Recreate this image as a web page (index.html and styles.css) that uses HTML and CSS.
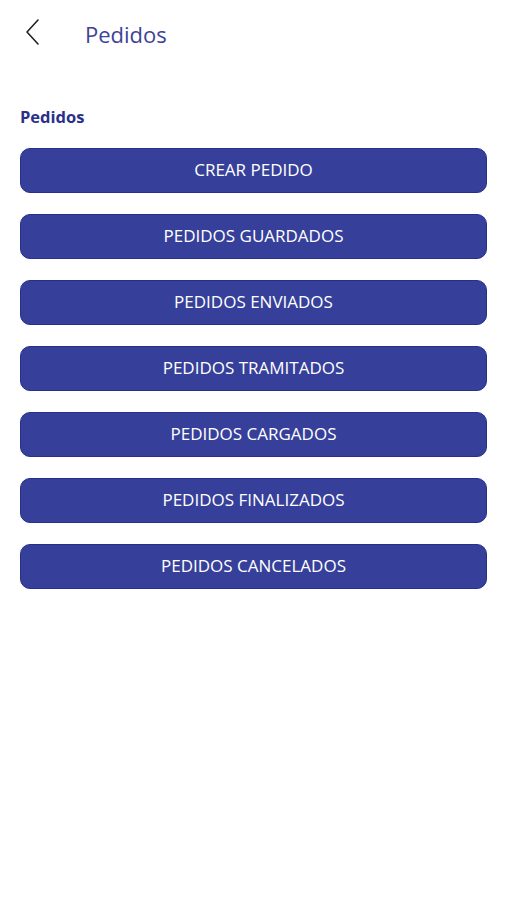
FILE: index.html
```html
<!DOCTYPE html>
<html lang="es">
<head>
<meta charset="utf-8">
<link rel="stylesheet" href="styles.css">
</head>
<body>
<header class="topbar">
  <button class="back" aria-label="Atrás">
    <svg width="16" height="28" viewBox="0 0 16 28"><path d="M13 2 L2 14 L13 26" fill="none" stroke="#222" stroke-width="1.6" stroke-linecap="round" stroke-linejoin="round"/></svg>
  </button>
  <h1 class="title">Pedidos</h1>
</header>
<main class="content">
  <h2 class="section">Pedidos</h2>
  <div class="buttons">
    <button class="btn">CREAR PEDIDO</button>
    <button class="btn">PEDIDOS GUARDADOS</button>
    <button class="btn">PEDIDOS ENVIADOS</button>
    <button class="btn">PEDIDOS TRAMITADOS</button>
    <button class="btn">PEDIDOS CARGADOS</button>
    <button class="btn">PEDIDOS FINALIZADOS</button>
    <button class="btn">PEDIDOS CANCELADOS</button>
  </div>
</main>
</body>
</html>
```

FILE: styles.css
```css
* { box-sizing: border-box; }
html, body { margin: 0; padding: 0; background: #fff; }
body { width: 506px; height: 900px; font-family: "Open Sans", "Noto Sans", sans-serif; }
.topbar { display: flex; align-items: center; height: 70px; padding-left: 25px; }
.back { background: none; border: 0; padding: 0; width: 18px; height: 28px; margin-top: -6px; display: flex; }
.title { margin: 0 0 0 42px; font-weight: 400; font-size: 22px; color: #3c4398; margin-top: -2px; }
.content { padding: 36px 19px 0 20px; }
.section { margin: 0 0 20px 0; font-size: 16.5px; font-weight: 700; color: #2b2f8c; line-height: 22px; }
.buttons { display: flex; flex-direction: column; gap: 21px; }
.btn { height: 45px; width: 467px; border-radius: 10px; background: #36409a; border: 1px solid #26308c; color: #fff; font-family: "Open Sans", "Noto Sans", sans-serif; font-size: 17px; letter-spacing: 0; padding: 0 0 3px 0; }
```
